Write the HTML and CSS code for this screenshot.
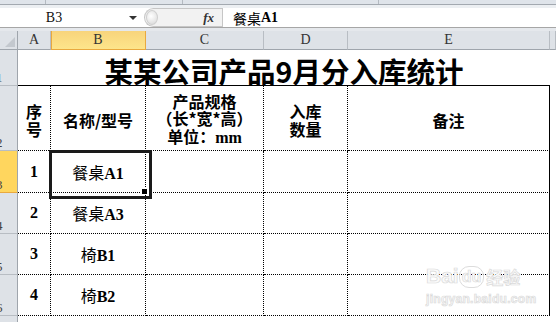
FILE: index.html
```html
<!doctype html>
<html lang="zh-CN">
<head>
  <meta charset="utf-8">
  <title>产品入库统计</title>
  <link rel="stylesheet" href="styles.css">
</head>
<body>
  <div class="app">
    <div class="ribbon-edge">
      <span class="seg1"></span>
      <span class="seg2"></span>
      <span class="seg3"></span>
    </div>

    <div class="fbar">
      <div class="namebox">
        <span class="nb-text">B3</span>
        <span class="nb-arrow"></span>
      </div>
      <div class="ftools">
        <span class="grip"></span>
        <span class="fx">fx</span>
      </div>
      <div class="finput">餐桌<span class="lat">A1</span></div>
    </div>
    <div class="gap"></div>

    <div class="sheet">
      <!-- column headers -->
      <div class="ch corner">
        <svg width="10" height="10" viewBox="0 0 10 10"><polygon points="10,0 10,10 0,10" fill="#c3c8ce"/></svg>
      </div>
      <div class="ch">A</div>
      <div class="ch sel">B</div>
      <div class="ch">C</div>
      <div class="ch">D</div>
      <div class="ch">E</div>
      <div class="ch"></div>

      <!-- row 1 -->
      <div class="rh"><span>1</span></div>
      <div class="title">某某公司产品9月分入库统计</div>
      <div class="f"></div>

      <!-- row 2 -->
      <div class="rh"><span>2</span></div>
      <div class="c h"><div>序<br>号</div></div>
      <div class="c h"><div>名称/型号</div></div>
      <div class="c h tight"><div>产品规格<br>（长*宽*高）<br>单位：<span class="lat">mm</span></div></div>
      <div class="c h"><div>入库<br>数量</div></div>
      <div class="c h last"><div>备注</div></div>
      <div class="f"></div>

      <!-- row 3 -->
      <div class="rh sel"><span>3</span></div>
      <div class="c num">1</div>
      <div class="c d active"><div>餐桌<span class="lat">A1</span></div></div>
      <div class="c"></div>
      <div class="c"></div>
      <div class="c last"></div>
      <div class="f"></div>

      <!-- row 4 -->
      <div class="rh"><span>4</span></div>
      <div class="c num">2</div>
      <div class="c d"><div>餐桌<span class="lat">A3</span></div></div>
      <div class="c"></div>
      <div class="c"></div>
      <div class="c last"></div>
      <div class="f"></div>

      <!-- row 5 -->
      <div class="rh"><span>5</span></div>
      <div class="c num">3</div>
      <div class="c d"><div>椅<span class="lat">B1</span></div></div>
      <div class="c"></div>
      <div class="c"></div>
      <div class="c last"></div>
      <div class="f"></div>

      <!-- row 6 -->
      <div class="rh"><span>6</span></div>
      <div class="c num">4</div>
      <div class="c d"><div>椅<span class="lat">B2</span></div></div>
      <div class="c"></div>
      <div class="c"></div>
      <div class="c last"></div>
      <div class="f"></div>

      <!-- row 7 (partly visible) -->
      <div class="rh end"></div>
      <div class="rest"></div>
    </div>

    <div class="wm">
      <div class="wm-top"><span>Bai</span><span class="wm-du">du</span><span class="wm-jy">经验</span></div>
      <div class="wm-url">jingyan.baidu.com</div>
    </div>
  </div>
</body>
</html>
```

FILE: styles.css
```css
* {
  box-sizing: border-box;
}
body {
  margin: 0;
  background: #fff;
  font-family: "Liberation Serif", "Noto Sans CJK SC", serif;
  color: #000;
}
.app {
  position: relative;
  width: 556px;
  height: 322px;
  overflow: hidden;
}

/* bottom edge of the ribbon */
.ribbon-edge {
  display: flex;
  height: 5px;
  background: #dfe4ea;
  border-bottom: 1px solid #a3a9b0;
}
.ribbon-edge span {
  border-right: 1px solid #b4bac1;
}
.seg1 { width: 46px; }
.seg2 { width: 137px; }
.seg3 { width: 196px; }

/* formula bar */
.fbar {
  display: flex;
  height: 23px;
  border-top: 3px solid #eceff2;
  border-bottom: 1px solid #a6a6a6;
}
.namebox {
  display: flex;
  align-items: center;
  width: 144px;
  background: #fff;
}
.nb-text {
  width: 108px;
  text-align: center;
  font-size: 14px;
  color: #111;
}
.nb-arrow {
  margin-left: 21px;
  border-left: 4px solid transparent;
  border-right: 4px solid transparent;
  border-top: 4px solid #333;
}
.ftools {
  display: flex;
  align-items: center;
  justify-content: space-between;
  width: 78px;
  background: #f2f2f2;
  border: 1px solid #c6c6c6;
  border-right: none;
  border-radius: 10px 0 0 10px;
}
.grip {
  width: 12px;
  height: 15px;
  margin-left: 1px;
  border-radius: 50%;
  border: 1px solid #cfcfcf;
  background: radial-gradient(circle at 40% 40%, #fff, #d6d6d6);
}
.fx {
  margin-right: 8px;
  font-size: 13px;
  font-style: italic;
  font-weight: bold;
  color: #333;
}
.finput {
  flex: 1;
  display: flex;
  align-items: center;
  padding-left: 10px;
  background: #fff;
  border-left: 1px solid #c6c6c6;
  font-family: "Noto Sans CJK SC", sans-serif;
  font-size: 14px;
}
.gap {
  height: 3px;
  background: #e5e8ec;
}

/* sheet grid */
.sheet {
  display: grid;
  grid-template-columns: 18px 33px 95px 118px 84px 202px 1fr;
  grid-template-rows: 19px 36px 65px 42px 41px 41px 41px 1fr;
  height: 291px;
}
.ch {
  display: flex;
  align-items: center;
  justify-content: center;
  background: #dee2e7;
  border-right: 1px solid #b8bdc3;
  border-bottom: 1px solid #9fa5ac;
  font-size: 14px;
  color: #333;
}
.ch.corner {
  align-items: flex-end;
  justify-content: flex-end;
  padding: 0 2px 2px 0;
  border-right-color: #9fa5ac;
}
.ch.sel {
  background: linear-gradient(#f8d47c, #fde58b);
  border-right-color: #e9a93f;
  box-shadow: inset 1px 0 #e9a93f;
  border-bottom-color: #e9a93f;
}
.rh {
  display: flex;
  align-items: flex-end;
  padding-bottom: 1px;
  overflow: hidden;
  background: #dee2e7;
  border-right: 1px solid #9fa5ac;
  border-bottom: 1px solid #b8bdc3;
  font-size: 13px;
  color: #444;
}
.rh span {
  margin-left: -4px;
  line-height: 1;
}
.rh.sel {
  background: #ffd65e;
  border-bottom-color: #e9a93f;
}
.rh.end {
  border-bottom: none;
}
.rest {
  grid-column: 2 / 8;
}

.title {
  grid-column: 2 / 7;
  display: flex;
  align-items: flex-end;
  justify-content: center;
  border-bottom: 1px solid #000;
  font-family: "Noto Sans CJK SC", sans-serif;
  font-weight: 700;
  font-size: 28.5px;
  line-height: 29px;
}

.c {
  display: flex;
  align-items: center;
  justify-content: center;
  text-align: center;
  border-right: 1px dotted #000;
  border-bottom: 1px dotted #000;
  font-size: 16px;
}
.c.last {
  border-right: 1px solid #000;
}
.c.h {
  padding-top: 3px;
  font-family: "Noto Sans CJK SC", sans-serif;
  font-weight: 700;
  line-height: 18px;
}
.c.h.tight {
  line-height: 17.5px;
  white-space: nowrap;
}
.c.num {
  font-weight: bold;
}
.c.d {
  font-family: "Noto Sans CJK SC", sans-serif;
}
.lat {
  font-family: "Liberation Serif", serif;
  font-weight: bold;
}
.c.active {
  position: relative;
}
.c.active::after {
  content: "";
  position: absolute;
  left: -2px;
  top: -1px;
  width: 97px;
  height: 43px;
  border: 3px solid #1a1a1a;
}
.c.active::before {
  content: "";
  position: absolute;
  right: -3px;
  bottom: -3px;
  width: 5px;
  height: 5px;
  background: #000;
  border: 1px solid #fff;
  z-index: 1;
}

/* watermark */
.wm {
  position: absolute;
  left: 426px;
  top: 264px;
  color: #fafafa;
  -webkit-text-stroke: 0.7px #dadada;
  font-family: "Liberation Sans", sans-serif;
  font-weight: bold;
}
.wm-top {
  display: flex;
  align-items: flex-end;
  font-size: 21px;
  line-height: 24px;
}
.wm-du {
  padding: 0 2px;
  border: 1px solid #dcdcdc;
  border-radius: 10px;
  font-size: 16px;
  line-height: 20px;
}
.wm-jy {
  margin-left: 2px;
  font-family: "Noto Sans CJK SC", sans-serif;
  font-size: 17px;
  line-height: 22px;
}
.wm-url {
  margin-top: 5px;
  font-size: 12px;
  line-height: 12px;
  letter-spacing: 0.3px;
}
```
